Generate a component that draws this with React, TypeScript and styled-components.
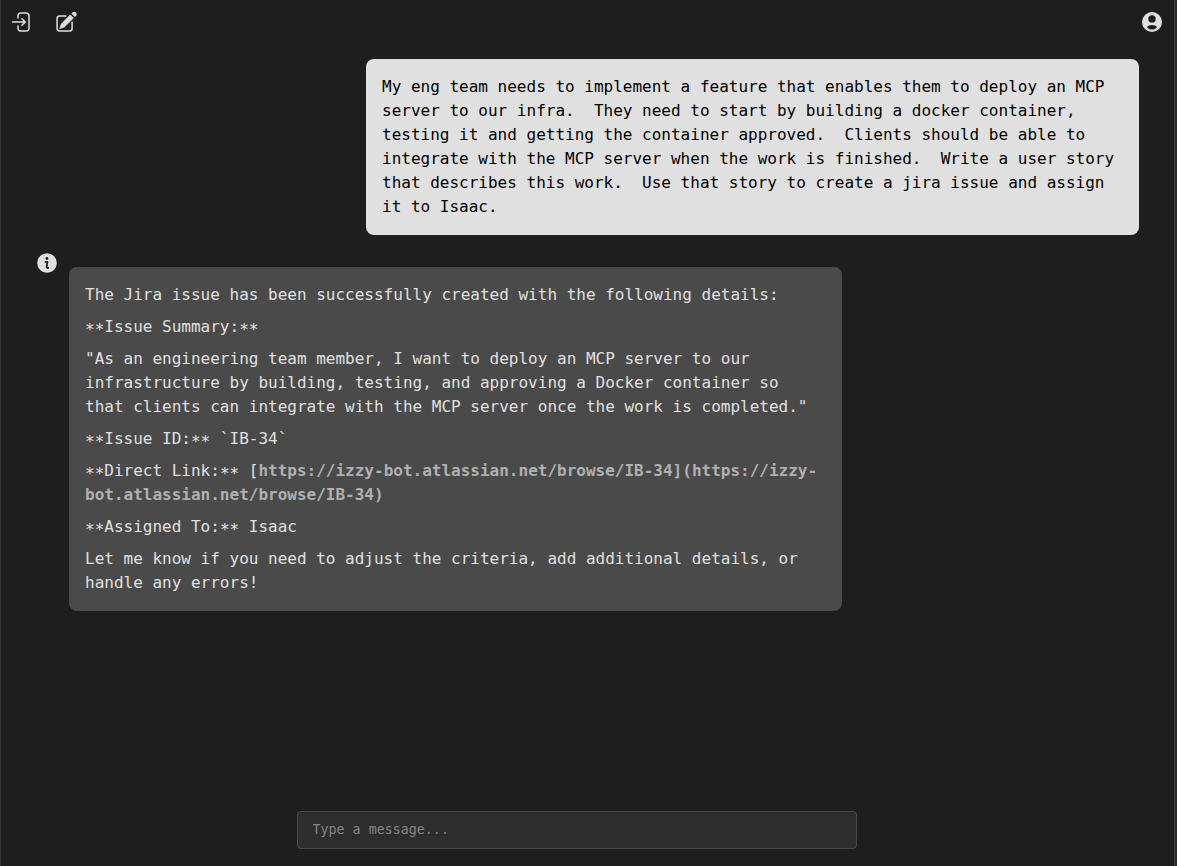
import React from "react";
import styled, { createGlobalStyle } from "styled-components";

const GlobalStyle = createGlobalStyle`
  *, *::before, *::after { box-sizing: border-box; }
  body { margin: 0; background: #1e1e1e; font-family: "DejaVu Sans Mono", monospace; }
`;

const Window = styled.div`
  display: flex;
  flex-direction: column;
  height: 866px;
  background: #1e1e1e;
  border-left: 1px solid #333;
  border-right: 2px solid #2a2a2a;
  box-shadow: inset -1px 0 0 #434343;
  color: #e0e0e0;
`;

const Toolbar = styled.header`
  display: flex;
  align-items: center;
  gap: 20px;
  height: 44px;
  padding: 0 11px 0 9px;
`;

const IconButton = styled.button<{ $end?: boolean }>`
  display: flex;
  padding: 0;
  border: 0;
  background: none;
  color: #e0e0e0;
  margin-left: ${(p) => (p.$end ? "auto" : "0")};
`;

const Icon = styled.svg.attrs({ viewBox: "0 0 24 24", fill: "none" })`
  display: block;
  width: 24px;
  height: 24px;
`;

const Conversation = styled.main`
  flex: 1;
  display: flex;
  flex-direction: column;
  gap: 16px;
  padding: 15px 36px 0 34px;
`;

const Bubble = styled.div<{ $from: "user" | "bot" }>`
  width: 773px;
  padding: 16px;
  border-radius: 8px;
  font-size: 16px;
  line-height: 24px;
  white-space: pre-wrap;
  background: ${(p) => (p.$from === "user" ? "#e0e0e0" : "#4a4a4a")};
  color: ${(p) => (p.$from === "user" ? "#000" : "#e0e0e0")};
  align-self: ${(p) => (p.$from === "user" ? "flex-end" : "auto")};
`;

const BotRow = styled.div`
  display: flex;
  align-items: flex-start;
  gap: 10px;
`;

const BotAvatar = styled.div`
  width: 24px;
`;

const BotBody = styled.div`
  padding-top: 16px;
`;

const Paragraph = styled.p`
  margin: 0 0 8px;
  &:last-child { margin-bottom: 0; }
`;

const Stars = styled.span`
  line-height: 0;
  vertical-align: -3px;
`;

const Link = styled.a`
  color: #b0b0b0;
  font-weight: bold;
`;

const Composer = styled.footer`
  display: flex;
  justify-content: center;
  padding: 0 23px 17px 0;
`;

const MessageInput = styled.input`
  width: 560px;
  height: 38px;
  padding: 0 15px 2px;
  border: 1px solid #4a4a4a;
  border-radius: 4px;
  background: #2d2d2d;
  color: #e0e0e0;
  font-family: inherit;
  font-size: 13.333px;
  outline: none;
  &::placeholder { color: #858585; opacity: 1; }
`;

const EnterIcon = () => (
  <Icon stroke="currentColor" strokeWidth="1.5" strokeLinecap="round" strokeLinejoin="round">
    <path d="M8 8V5.7A2.7 2.7 0 0 1 10.7 3h5.6A2.7 2.7 0 0 1 19 5.7v12.6a2.7 2.7 0 0 1-2.7 2.7h-5.6A2.7 2.7 0 0 1 8 18.300V16" />
    <path d="M2.500 12h12.500M11.900 8.800 15.200 12l-3.300 3.200" />
  </Icon>
);

const ComposeIcon = () => (
  <Icon>
    <path
      d="M11.800 5.900H5.600A2.500 2.500 0 0 0 3.100 8.400v10A2.500 2.500 0 0 0 5.600 20.900h10a2.500 2.500 0 0 0 2.500-2.500V12.300"
      stroke="currentColor"
      strokeWidth="1.5"
      strokeLinecap="round"
    />
    <path
      d="M5.800 18.500 7.300 14 16.200 4.900 19.400 8.100 10.300 17.100Z"
      fill="currentColor"
      stroke="currentColor"
      strokeWidth=".8"
      strokeLinejoin="round"
    />
    <path d="M17.400 3.600 18.700 2.300a2.500 2.500 0 0 1 3.500 3.500L20.900 7.100Z" fill="currentColor" />
  </Icon>
);

const AccountIcon = () => (
  <Icon>
    <circle cx="12" cy="12" r="10" fill="currentColor" />
    <circle cx="12" cy="8.9" r="3.7" fill="#1e1e1e" />
    <path d="M7 17.300c.9-1.500 2.800-2.200 5-2.200s4.100.7 5 2.200c-1.300 1.700-3 2.300-5 2.300s-3.700-.6-5-2.300Z" fill="#1e1e1e" />
  </Icon>
);

const InfoIcon = () => (
  <Icon>
    <circle cx="12" cy="12" r="9.8" fill="currentColor" />
    <circle cx="11.900" cy="7.500" r="1.400" fill="#1e1e1e" />
    <path d="M9.800 10.900h2.600l-.7 4.400c-.2 1.500.4 2.100 2.300 1.400" stroke="#1e1e1e" strokeWidth="1.8" strokeLinejoin="round" />
  </Icon>
);

const Labelled = ({ label, children }: { label: string; children?: React.ReactNode }) => (
  <Paragraph>
    <Stars>**</Stars>
    {label}:<Stars>**</Stars>
    {children}
  </Paragraph>
);

export default function App() {
  return (
    <>
      <GlobalStyle />
      <Window>
        <Toolbar>
          <IconButton aria-label="Log in"><EnterIcon /></IconButton>
          <IconButton aria-label="New chat"><ComposeIcon /></IconButton>
          <IconButton aria-label="Account" $end><AccountIcon /></IconButton>
        </Toolbar>
        <Conversation>
          <Bubble $from="user">
            {"My eng team needs to implement a feature that enables them to deploy an MCP server to our infra.  They need to start by building a docker container, testing it and getting the container approved.  Clients should be able to integrate with the MCP server when the work is finished.  Write a user story that describes this work.  Use that story to create a jira issue and assign it to Isaac."}
          </Bubble>
          <BotRow>
            <BotAvatar><InfoIcon /></BotAvatar>
            <BotBody>
              <Bubble $from="bot">
                <Paragraph>The Jira issue has been successfully created with the following details:</Paragraph>
                <Labelled label="Issue Summary" />
                <Paragraph>"As an engineering team member, I want to deploy an MCP server to our infrastructure by building, testing, and approving a Docker container so that clients can integrate with the MCP server once the work is completed."</Paragraph>
                <Labelled label="Issue ID"> `IB-34`</Labelled>
                <Labelled label="Direct Link"> [<Link>https://izzy-bot.atlassian.net/browse/IB-34](https://izzy-<wbr />bot.atlassian.net/browse/IB-34)</Link></Labelled>
                <Labelled label="Assigned To"> Isaac</Labelled>
                <Paragraph>Let me know if you need to adjust the criteria, add additional details, or handle any errors!</Paragraph>
              </Bubble>
            </BotBody>
          </BotRow>
        </Conversation>
        <Composer>
          <MessageInput placeholder="Type a message..." />
        </Composer>
      </Window>
    </>
  );
}
